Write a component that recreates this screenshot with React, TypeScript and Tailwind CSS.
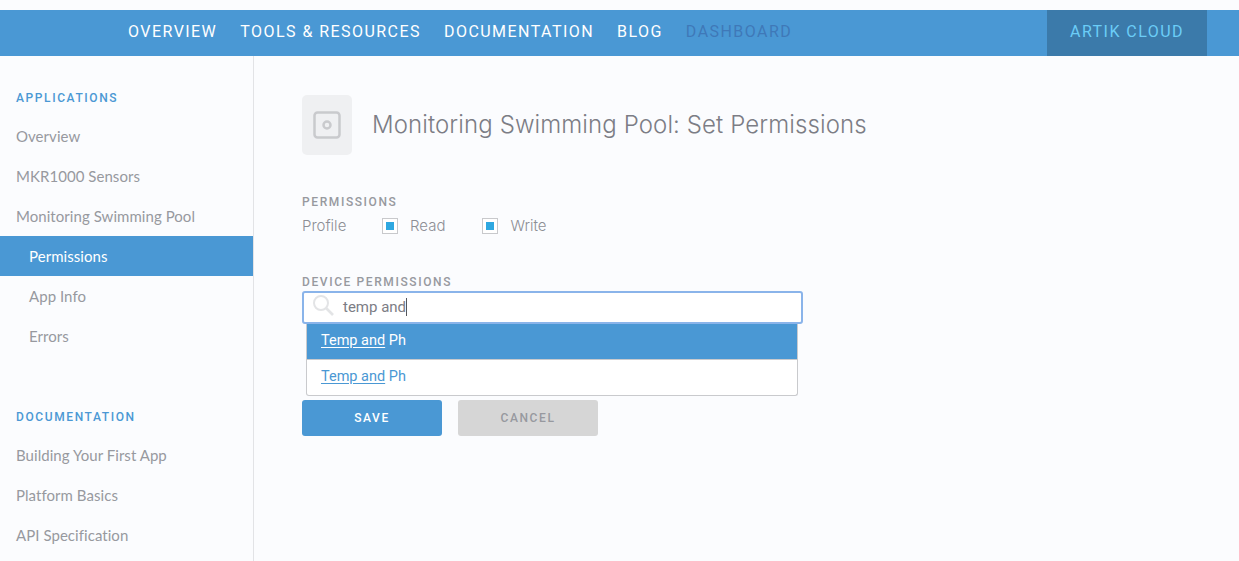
const navItems = ["OVERVIEW", "TOOLS & RESOURCES", "DOCUMENTATION", "BLOG"];

const SectionTitle = ({ children }: { children: string }) => (
  <div className="flex h-10 items-center pl-4 pt-[3px] font-['Roboto',sans-serif] text-xs font-medium tracking-[1.6px] text-[#4a98d4]">
    {children}
  </div>
);

const SideLink = ({ label, sub, active }: { label: string; sub?: boolean; active?: boolean }) => (
  <div
    className={`flex h-10 items-center font-['Lato',sans-serif] text-[15px] tracking-[0.05px] ${sub ? "pl-[29px]" : "pl-4"} ${
      active ? "bg-[#4a98d4] text-white" : "text-[#97999f]"
    }`}
  >
    {label}
  </div>
);

const Check = ({ label }: { label: string }) => (
  <div className="flex items-center gap-3">
    <span className="flex size-4 items-center justify-center border border-[#c8c9cc] bg-white">
      <span className="size-2 bg-[#2ea7e0]" />
    </span>
    <span>{label}</span>
  </div>
);

export default function App() {
  return (
    <div className="flex h-[561px] flex-col overflow-hidden bg-[#fbfcfe] pt-[10px]">
      <header className="flex h-[46px] shrink-0 items-center bg-[#4a98d4] pl-[128px] pr-8 font-['Roboto',sans-serif] text-base tracking-[1.45px] text-white">
        <nav className="flex gap-[23px] pb-[2px]">
          {navItems.map((item) => (
            <span key={item}>{item}</span>
          ))}
          <span className="text-[#3f78b8]">DASHBOARD</span>
        </nav>
        <div className="ml-auto flex h-full w-40 items-center justify-center bg-[#3b7aaa] pb-[2px] text-[#6bcdf7]">
          ARTIK CLOUD
        </div>
      </header>

      <div className="flex min-h-0 flex-1">
        <aside className="w-[254px] shrink-0 border-r border-[#e2e3e6] pt-5">
          <SectionTitle>APPLICATIONS</SectionTitle>
          <SideLink label="Overview" />
          <SideLink label="MKR1000 Sensors" />
          <SideLink label="Monitoring Swimming Pool" />
          <SideLink label="Permissions" sub active />
          <SideLink label="App Info" sub />
          <SideLink label="Errors" sub />
          <div className="h-[39px]" />
          <SectionTitle>DOCUMENTATION</SectionTitle>
          <SideLink label="Building Your First App" />
          <SideLink label="Platform Basics" />
          <SideLink label="API Specification" />
        </aside>

        <main className="flex-1 pl-12 pt-[39px]">
          <div className="flex items-center gap-5">
            <div className="flex h-[60px] w-[50px] items-center justify-center rounded-[5px] bg-[#eff0f2]">
              <svg width="28" height="28" viewBox="0 0 28 28" fill="none" stroke="#c9cacd">
                <rect x="1.5" y="1.5" width="25" height="25" rx="3" strokeWidth="2.5" />
                <circle cx="14" cy="14" r="3.5" strokeWidth="2.5" />
              </svg>
            </div>
            <h1 className="font-['Inter',sans-serif] text-2xl font-light tracking-[0.1px] text-[#7c7d85]">
              Monitoring Swimming Pool: Set Permissions
            </h1>
          </div>

          <div className="mt-[39px] font-['Roboto',sans-serif] text-xs font-medium leading-[16px] tracking-[1.6px] text-[#97999f]">
            PERMISSIONS
          </div>
          <div className="mt-[6px] flex h-5 items-center font-['Inter',sans-serif] text-[15px] font-light text-[#8d8e95]">
            <span className="w-20">Profile</span>
            <div className="flex gap-[37px]">
              <Check label="Read" />
              <Check label="Write" />
            </div>
          </div>

          <div className="mt-[38px] font-['Roboto',sans-serif] text-xs font-medium leading-[16px] tracking-[1.6px] text-[#97999f]">
            DEVICE PERMISSIONS
          </div>
          <div className="mt-px w-[501px]">
            <div className="flex h-[33px] items-center rounded-[3px] border-2 border-[#8ab4ea] bg-white pl-[8px] font-['Roboto',sans-serif] text-[15px] text-[#7c7d85]">
              <svg width="22" height="22" viewBox="0 0 22 22" fill="none" stroke="#e3e4e6" strokeWidth="2" className="mb-[6px]">
                <circle cx="9" cy="9" r="7" />
                <path d="M14 14 L21 21" strokeWidth="2.6" />
              </svg>
              <span className="mb-[2px] ml-[9px] border-r border-[#55565c] leading-[18px]">temp and</span>
            </div>
            <div className="ml-1 mr-[5px] overflow-hidden rounded-b-[3px] border border-t-0 border-[#c9cacd] bg-white font-['Roboto',sans-serif] text-[14.5px]">
              <div className="flex h-[36px] items-center border-b border-[#c9cacd] bg-[#4a98d4] pb-px pl-[14px] text-white">
                <span className="underline underline-offset-2">Temp and</span>&nbsp;Ph
              </div>
              <div className="flex h-[35px] items-center pb-px pl-[14px] text-[#4a98d4]">
                <span className="underline underline-offset-2">Temp and</span>&nbsp;Ph
              </div>
            </div>
          </div>

          <div className="mt-1 flex gap-4 font-['Roboto',sans-serif] text-xs font-medium tracking-[1.6px]">
            <button className="h-9 w-[140px] rounded-[3px] bg-[#4a98d4] text-white">SAVE</button>
            <button className="h-9 w-[140px] rounded-[3px] bg-[#d6d6d6] text-[#97999f]">CANCEL</button>
          </div>
        </main>
      </div>
    </div>
  );
}
